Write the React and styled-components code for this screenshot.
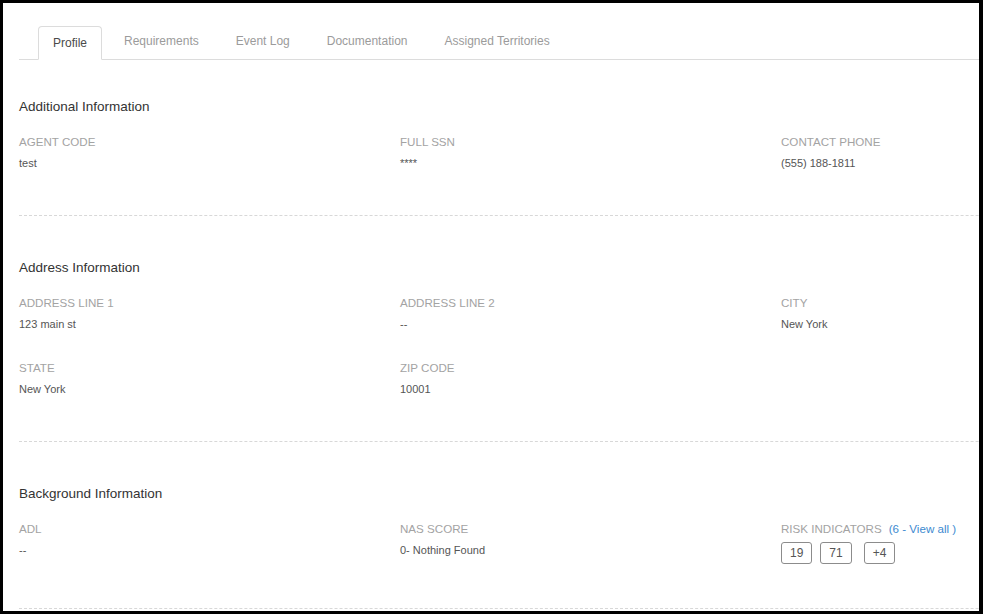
import React from "react";
import styled, { createGlobalStyle } from "styled-components";

const GlobalStyle = createGlobalStyle`
  html, body {
    margin: 0;
    padding: 0;
    background: #ffffff;
  }
  body {
    font-family: "Liberation Sans", Arial, sans-serif;
  }
`;

const Frame = styled.div`
  width: 983px;
  height: 614px;
  box-sizing: border-box;
  border-style: solid;
  border-color: #000;
  border-width: 3px 4px 3px 3px;
  overflow: hidden;
  background: #fff;
`;

const Page = styled.div`
  width: 1200px;
  padding: 23px 0 0 16px;
`;

const TabBar = styled.div`
  display: flex;
  align-items: flex-end;
  padding-left: 19px;
  border-bottom: 1px solid #dcdcdc;
`;

const Tab = styled.div`
  height: 34px;
  box-sizing: border-box;
  display: flex;
  align-items: center;
  padding: ${(p) => (p.$active ? "0 14px" : "0 14px 4px")};
  margin: 0 7px -1px 0;
  border: 1px solid ${(p) => (p.$active ? "#dcdcdc" : "transparent")};
  border-bottom-color: ${(p) => (p.$active ? "#fff" : "transparent")};
  border-radius: 4px 4px 0 0;
  background: ${(p) => (p.$active ? "#fff" : "transparent")};
  font-size: 12px;
  color: ${(p) => (p.$active ? "#4a4a4a" : "#9b9b9b")};
  white-space: nowrap;
`;

const Section = styled.section`
  padding: ${(p) => (p.$first ? "36px" : "41px")} 0 44px;
  border-bottom: 1px dashed #d8d8d8;
`;

const SectionTitle = styled.h3`
  margin: 0 0 16px;
  padding-top: 1px;
  font-size: 13.5px;
  line-height: 20px;
  font-weight: normal;
  color: #333;
`;

const FieldGrid = styled.div`
  display: grid;
  grid-template-columns: repeat(3, 381px);
  row-gap: 27px;
`;

const Field = styled.div`
  display: flex;
  flex-direction: column;
`;

const Label = styled.div`
  font-size: 11.6px;
  line-height: 16px;
  padding-top: 1px;
  color: #a3a3a3;
  margin-bottom: 5px;
  white-space: nowrap;
`;

const Value = styled.div`
  font-size: 11px;
  line-height: 16px;
  color: #555;
`;

const LinkText = styled.a`
  margin-left: 7px;
  color: #3d8ad0;
  text-decoration: none;
  cursor: pointer;
`;

const BadgeRow = styled.div`
  display: flex;
  align-items: center;
`;

const Badge = styled.span`
  box-sizing: border-box;
  height: 22px;
  min-width: 31px;
  padding: 0 8px;
  margin-right: ${(p) => (p.$wide ? "12px" : "8px")};
  display: inline-flex;
  align-items: center;
  justify-content: center;
  border: 1px solid #8c8c8c;
  border-radius: 3px;
  font-size: 12px;
  color: #555;
`;

const tabs = ["Profile", "Requirements", "Event Log", "Documentation", "Assigned Territories"];

const sections = [
  {
    title: "Additional Information",
    fields: [
      ["AGENT CODE", "test"],
      ["FULL SSN", "****"],
      ["CONTACT PHONE", "(555) 188-1811"],
    ],
  },
  {
    title: "Address Information",
    fields: [
      ["ADDRESS LINE 1", "123 main st"],
      ["ADDRESS LINE 2", "--"],
      ["CITY", "New York"],
      ["STATE", "New York"],
      ["ZIP CODE", "10001"],
    ],
  },
];

export default function App() {
  return (
    <>
      <GlobalStyle />
      <Frame>
        <Page>
          <TabBar>
            {tabs.map((t, i) => (
              <Tab key={t} $active={i === 0}>
                {t}
              </Tab>
            ))}
          </TabBar>

          {sections.map((s, i) => (
            <Section key={s.title} $first={i === 0}>
              <SectionTitle>{s.title}</SectionTitle>
              <FieldGrid>
                {s.fields.map(([label, value]) => (
                  <Field key={label}>
                    <Label>{label}</Label>
                    <Value>{value}</Value>
                  </Field>
                ))}
              </FieldGrid>
            </Section>
          ))}

          <Section>
            <SectionTitle>Background Information</SectionTitle>
            <FieldGrid>
              <Field>
                <Label>ADL</Label>
                <Value>--</Value>
              </Field>
              <Field>
                <Label>NAS SCORE</Label>
                <Value>0- Nothing Found</Value>
              </Field>
              <Field>
                <Label>
                  RISK INDICATORS
                  <LinkText>(6 - View all )</LinkText>
                </Label>
                <BadgeRow>
                  <Badge>19</Badge>
                  <Badge $wide>71</Badge>
                  <Badge>+4</Badge>
                </BadgeRow>
              </Field>
            </FieldGrid>
          </Section>
        </Page>
      </Frame>
    </>
  );
}
